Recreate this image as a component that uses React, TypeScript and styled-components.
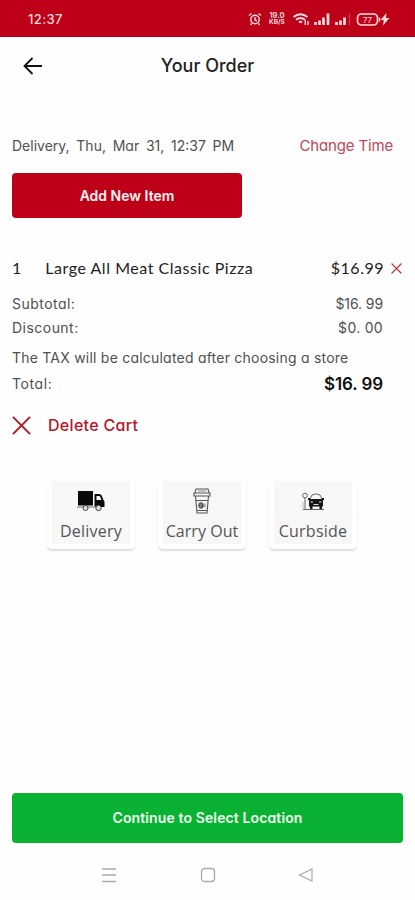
import React from "react";
import styled, { createGlobalStyle } from "styled-components";

const GlobalStyle = createGlobalStyle`
  * { box-sizing: border-box; }
  body { margin: 0; background: #fff; }
`;

const Screen = styled.div`
  width: 415px;
  height: 900px;
  display: flex;
  flex-direction: column;
  background: #fefefe;
  overflow: hidden;
  font-family: Inter, "Liberation Sans", sans-serif;
  font-feature-settings: "cv11";
  color: #222;
`;

const StatusBar = styled.header`
  height: 37px;
  flex: none;
  display: flex;
  align-items: center;
  justify-content: space-between;
  padding: 1px 25px 0 28px;
  background: #bd0018;
  color: #fbdcde;
`;

const StatusIcons = styled.div`
  display: flex;
  align-items: center;
  width: 142px;
  height: 18px;
`;

const NetSpeed = styled.div`
  display: flex;
  flex-direction: column;
  width: 18px;
  margin: 0 5px 0 6px;
  font-size: 7.5px;
  line-height: 7.5px;
  font-weight: 700;
  text-align: center;
  white-space: nowrap;
`;

const SpeedUnit = styled.span`
  font-size: 6.5px;
`;

const TitleBar = styled.div`
  height: 58px;
  flex: none;
  display: grid;
  grid-template-columns: 44px 1fr 44px;
  align-items: center;
  padding: 0 12px;
  text-align: center;
`;

const Label = styled.span<{
  $size?: number;
  $weight?: number;
  $color?: string;
  $spacing?: number;
  $words?: number;
  $font?: string;
}>`
  white-space: pre;
  line-height: 20px;
  font-size: ${(p) => p.$size ?? 14}px;
  font-weight: ${(p) => p.$weight ?? 400};
  color: ${(p) => p.$color ?? "#505050"};
  letter-spacing: ${(p) => p.$spacing ?? 0}px;
  word-spacing: ${(p) => p.$words ?? 0}px;
  ${(p) => p.$font && `font-family: ${p.$font}, sans-serif;`}
`;

const Icon = styled.svg`
  display: block;
  flex: none;
`;

const Row = styled.div<{ $height: number; $top?: number; $right?: number }>`
  display: flex;
  flex: none;
  align-items: center;
  justify-content: space-between;
  height: ${(p) => p.$height}px;
  margin-top: ${(p) => p.$top ?? 0}px;
  padding: 0 ${(p) => p.$right ?? 32}px 0 12px;
`;

const Cluster = styled.div<{ $gap: number }>`
  display: flex;
  align-items: center;
  gap: ${(p) => p.$gap}px;
`;

const Button = styled.button<{ $color: string; $width: number; $height: number; $top?: number }>`
  display: flex;
  flex: none;
  align-items: center;
  justify-content: center;
  width: ${(p) => p.$width}px;
  height: ${(p) => p.$height}px;
  margin: ${(p) => p.$top ?? 0}px 0 0 12px;
  padding: 0;
  border: 0;
  border-radius: 4px;
  background: ${(p) => p.$color};
  font: inherit;
  font-feature-settings: inherit;
`;

const Tiles = styled.div`
  display: flex;
  flex: none;
  gap: 23px;
  margin: 41px 0 0 47px;
`;

const Tile = styled.div`
  width: 88px;
  height: 68px;
  display: flex;
  flex-direction: column;
  align-items: center;
  gap: 6px;
  padding-top: 6px;
  border: 5px solid #fff;
  border-top: 0;
  border-radius: 5px;
  background: #f7f7f7;
  box-shadow: 0 2px 2px rgba(0, 0, 0, 0.13);
`;

const TileArt = styled.div`
  height: 28px;
  flex: none;
  display: flex;
  align-items: center;
`;

const Spacer = styled.div`
  flex: 1;
`;

const NavBar = styled.nav`
  height: 57px;
  flex: none;
  display: flex;
  align-items: center;
  justify-content: space-between;
  padding: 6px 101px 0 101px;
`;

const Cross = ({ size, width, color }: { size: number; width: number; color: string }) => (
  <Icon width={size} height={size} viewBox="0 0 20 20" stroke={color} strokeWidth={width}>
    <path d="M1 1 19 19M19 1 1 19" />
  </Icon>
);

const StatusGlyphs = () => (
  <StatusIcons>
    <Icon width="14" height="18" viewBox="0 0 14 18" fill="none" stroke="#fbdcde" strokeWidth="1.4">
      <circle cx="7" cy="9.5" r="4.2" />
      <path d="M7 7v3l2 1M1 5.5 3.5 3.5M13 5.5 10.5 3.5M3.5 13.5 2.5 15M10.5 13.5l1 1.5" />
    </Icon>
    <NetSpeed>
      <span>19.0</span>
      <SpeedUnit>KB/S</SpeedUnit>
    </NetSpeed>
    <Icon width="99" height="18" viewBox="43 0 99 18" fill="none" stroke="#fbdcde" strokeWidth="1.4">
      <path d="M45.500 7q7-5.500 14 0M48 9.700q4.500-3.500 9 0M51 12.500q1.500-1.400 3 0" strokeWidth="2" />
      <path d="M57.300 10v5M60 11v4" />
      <path d="M67.500 15v-3M71.500 15v-4.500M75.500 15V7.500M80 15V3.500" strokeWidth="2.7" />
      <path d="M88.500 15v-3M92.500 15v-4.500M96.500 15V7.500" strokeWidth="2.7" />
      <path d="M101.500 15V3.500" stroke="#cf3b4b" strokeWidth="1.3" />
      <rect x="109.500" y="4" width="20" height="11" rx="4" strokeWidth="1.7" />
      <path d="M131.500 7.500v4" />
      <text x="115" y="12.500" fill="#fbdcde" stroke="none" fontFamily="Inter, sans-serif" fontSize="8" textLength="9">77</text>
      <path d="m138.500 3-6 7h3.300l-.8 5.500 6.500-7.500h-3.500z" fill="#fbdcde" stroke="none" />
    </Icon>
  </StatusIcons>
);

const Truck = () => (
  <Icon width="28" height="22" viewBox="0 0 28 22">
    <path fill="#090909" d="M1 1h15v14.500H1zM17.500 4H22q2 0 2.700 1.500l1.500 4 1.300 2V17H17.500z" />
    <path fill="#f7f7f7" d="M19.500 6H22q1 0 1.300 1l1 3h-4.800z" />
    <path d="M0 17h19" stroke="#999" strokeWidth="1.5" />
    <g fill="#ddd" stroke="#444">
      <circle cx="8.500" cy="18" r="2.500" />
      <circle cx="21.500" cy="18" r="2.700" />
    </g>
  </Icon>
);

const Cup = () => (
  <Icon width="20" height="26" viewBox="0 0 20 26" fill="none" stroke="#555" strokeWidth="1.1">
    <path d="M4 1h12l1 4H3zM2 5h16v3H2zM3.500 8l1.500 17h10l1.500-17M4 12.500h12M5 22.500h10" />
    <path d="M6 3h8" stroke="#999" />
    <ellipse cx="9" cy="17.500" rx="2.200" ry="2.600" fill="#555" />
    <path d="M8 19.500q0-2 2-4" stroke="#ccc" strokeWidth=".8" />
    <path d="M13 15.500v4" stroke="#888" />
  </Icon>
);

const Car = () => (
  <Icon width="24" height="20" viewBox="0 0 24 20">
    <g fill="none" stroke="#666">
      <circle cx="4" cy="4.500" r="2.300" />
      <path d="M4 7v11M2 18.500h21M9 8l2-4q4-2.500 8 0l2 4" />
      <path d="M2 11v7" stroke="#bbb" />
    </g>
    <path fill="#151515" d="M8 8h14v7.500h-1V18h-2.500v-2.500h-7V18H9v-2.500H8zM7 7h2v2H7zM21 7h2v2h-2z" />
    <path d="M9.500 11H12M18 11h2.500M12.500 13.500h5" stroke="#ddd" />
  </Icon>
);

const tiles = [
  { name: "Delivery", art: <Truck />, spacing: 0.22 },
  { name: "Carry Out", art: <Cup />, spacing: 0.05 },
  { name: "Curbside", art: <Car />, spacing: 0.25 },
];

export default function App() {
  return (
    <Screen>
      <GlobalStyle />
      <StatusBar>
        <Label $size={13} $weight={500} $color="#fbdcde" $spacing={0.4}>12:37</Label>
        <StatusGlyphs />
      </StatusBar>
      <TitleBar>
        <Icon width="44" height="20" viewBox="0 0 44 20" fill="none" stroke="#111" strokeWidth="1.8">
          <path d="M30 10H12.500M20.500 2l-8 8 8 8" />
        </Icon>
        <Label $size={18} $weight={500} $color="#222">Your Order</Label>
      </TitleBar>
      <Row $height={22} $top={40} $right={22}>
        <Label $words={2.8}>Delivery, Thu, Mar 31, 12:37 PM</Label>
        <Label $size={15} $color="#c04658" $spacing={-0.15}>Change Time</Label>
      </Row>
      <Button $color="#bd0018" $width={230} $height={45} $top={16}>
        <Label $size={14} $weight={600} $color="#fff3f3">Add New Item</Label>
      </Button>
      <Row $height={24} $top={38} $right={13}>
        <Cluster $gap={24}>
          <Label $size={16} $font="Lato" $color="#222">1</Label>
          <Label $size={16} $font="Lato" $color="#222" $spacing={0.54}>Large All Meat Classic Pizza</Label>
        </Cluster>
        <Cluster $gap={7}>
          <Label $size={16} $font="Lato" $color="#222" $spacing={0.5}>$16.99</Label>
          <Cross size={11} width={2.2} color="#c43546" />
        </Cluster>
      </Row>
      <Row $height={24} $top={12}>
        <Label $spacing={0.47}>Subtotal:</Label>
        <Label $spacing={-0.1}>$16. 99</Label>
      </Row>
      <Row $height={24}>
        <Label $spacing={0.47}>Discount:</Label>
        <Label $spacing={0.3}>$0. 00</Label>
      </Row>
      <Row $height={24} $top={6}>
        <Label $spacing={0.22}>The TAX will be calculated after choosing a store</Label>
      </Row>
      <Row $height={24} $top={2}>
        <Label $spacing={0.6}>Total:</Label>
        <Label $size={17} $weight={600} $color="#111" $spacing={-0.1}>$16. 99</Label>
      </Row>
      <Row $height={30} $top={14}>
        <Cluster $gap={17}>
          <Cross size={19} width={2} color="#b91525" />
          <Label $size={16} $weight={500} $color="#b91528" $spacing={0.3}>Delete Cart</Label>
        </Cluster>
      </Row>
      <Tiles>
        {tiles.map((tile) => (
          <Tile key={tile.name}>
            <TileArt>{tile.art}</TileArt>
            <Label $size={16} $font='"Open Sans"' $spacing={tile.spacing} $color="#555">{tile.name}</Label>
          </Tile>
        ))}
      </Tiles>
      <Spacer />
      <Button $color="#09b233" $width={391} $height={50}>
        <Label $size={14} $weight={600} $color="#effff0" $spacing={0.12}>Continue to Select Location</Label>
      </Button>
      <NavBar>
        <Icon width="16" height="18" viewBox="0 0 16 18" stroke="#aaa" strokeWidth="1.3">
          <path d="M1 3h14M1 9h14M1 15.500h14" />
        </Icon>
        <Icon width="16" height="16" viewBox="0 0 16 16" fill="none" stroke="#aaa" strokeWidth="1.3">
          <rect x="1.500" y="1.500" width="13" height="13" rx="3" />
        </Icon>
        <Icon width="16" height="16" viewBox="0 0 16 16" fill="none" stroke="#aaa" strokeWidth="1.2">
          <path d="M14 2v12L1.500 8z" />
        </Icon>
      </NavBar>
    </Screen>
  );
}
